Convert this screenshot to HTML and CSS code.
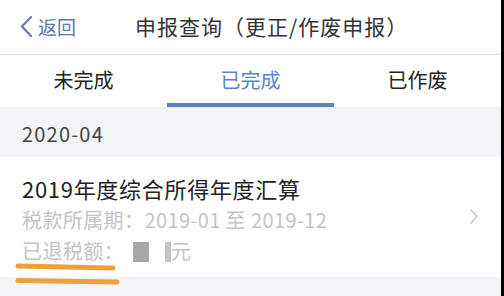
FILE: index.html
```html
<!DOCTYPE html>
<html lang="zh-CN">
<head>
    <meta charset="UTF-8">
    <meta name="viewport" content="width=device-width, initial-scale=1.0">
    <title>申报查询</title>
    <link rel="stylesheet" href="styles.css">
</head>
<body>
    <div class="screen">
        <!-- 顶部导航 -->
        <header class="nav">
            <a class="back" href="#">
                <svg class="back-icon" width="13" height="21" viewBox="0 0 13 21">
                    <polyline points="11,1 2,10.5 11,20" fill="none" stroke="#6579ad" stroke-width="2.2" stroke-linecap="round" stroke-linejoin="round"/>
                </svg>
                <span>返回</span>
            </a>
            <h1 class="nav-title">申报查询（更正/作废申报）</h1>
        </header>

        <!-- 标签页 -->
        <nav class="tabs">
            <div class="tab">未完成</div>
            <div class="tab active">已完成</div>
            <div class="tab">已作废</div>
        </nav>

        <div class="month">2020-04</div>

        <div class="record">
            <div class="record-body">
                <div class="record-title">2019年度综合所得年度汇算</div>
                <div class="record-line">税款所属期：2019-01 至 2019-12</div>
                <div class="record-line">已退税额：<span class="mask mask-big"></span><span class="mask mask-thin"></span>元</div>
            </div>
            <svg class="arrow" width="8" height="15" viewBox="0 0 8 15">
                <polyline points="1,1 7,7.5 1,14" fill="none" stroke="#c9c9c9" stroke-width="1.6" stroke-linecap="round" stroke-linejoin="round"/>
            </svg>
        </div>

        <div class="rest"></div>

        <!-- 橙色标注线 -->
        <svg class="marks" width="504" height="296" viewBox="0 0 504 296">
            <path d="M18 266 Q60 267 113 268" fill="none" stroke="#f0a038" stroke-width="5" stroke-linecap="round"/>
            <path d="M18 280.5 Q65 281 117 282" fill="none" stroke="#f0a038" stroke-width="5" stroke-linecap="round"/>
        </svg>
    </div>
</body>
</html>
```

FILE: styles.css
```css
html, body {
    margin: 0;
    padding: 0;
    height: 100%;
}
body {
    background-color: #000;
    font-family: "Noto Sans CJK SC", "Noto Sans", sans-serif;
    overflow: hidden;
}
.screen {
    position: relative;
    width: 501px;
    height: 296px;
    background-color: #f3f4f8;
}
.nav {
    display: flex;
    align-items: center;
    height: 54px;
    background-color: #fff;
    border-bottom: 1px solid #dcdcdf;
}
.back {
    display: flex;
    align-items: center;
    gap: 5px;
    padding-left: 20px;
    color: #5f78b0;
    font-size: 19px;
    text-decoration: none;
    margin-top: -2px;
}
.nav-title {
    margin: -2px 0 0 59px;
    font-size: 21px;
    font-weight: normal;
    color: #333;
    letter-spacing: 1px;
}
.tabs {
    display: flex;
    background-color: #fff;
    border-bottom: 1px solid #ececf0;
}
.tab {
    flex: 1;
    text-align: center;
    font-size: 20px;
    line-height: 30px;
    color: #222;
    padding: 10px 0 8px;
    border-bottom: 4px solid transparent;
}
.tab.active {
    color: #5b83cf;
    border-bottom-color: #5b80c9;
}
.month {
    height: 49px;
    line-height: 47px;
    padding: 2px 0 0 22px;
    box-sizing: border-box;
    font-size: 20px;
    letter-spacing: 1.2px;
    color: #444;
}
.record {
    display: flex;
    align-items: flex-start;
    background-color: #fff;
    padding: 16px 0 11px 22px;
}
.record-body {
    flex: 1;
}
.record-title {
    font-size: 22px;
    line-height: 31px;
    letter-spacing: 0.7px;
    color: #222;
}
.record-line {
    font-size: 20px;
    line-height: 31px;
    letter-spacing: 0.4px;
    color: #c4c4c6;
}
.mask {
    display: inline-block;
    vertical-align: middle;
    height: 20px;
    margin-top: -3px;
}
.mask-big {
    width: 16px;
    margin-left: 9px;
    background-color: #a9a9ab;
}
.mask-thin {
    width: 6px;
    margin-left: 16px;
    background-color: #c4c4c6;
}
.arrow {
    margin: 36px 23px 0 0;
}
.marks {
    position: absolute;
    left: 0;
    top: 0;
    pointer-events: none;
}
```
